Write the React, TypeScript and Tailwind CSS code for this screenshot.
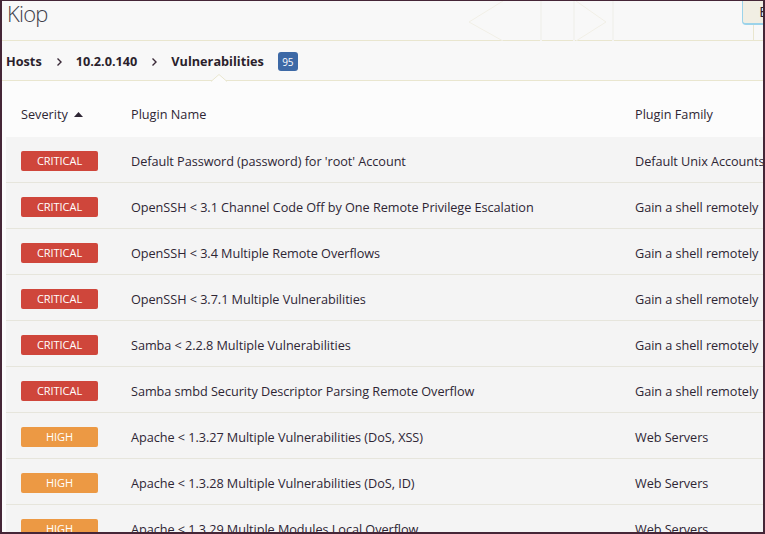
import React from "react";

type Vuln = {
  severity: "CRITICAL" | "HIGH";
  name: string;
  family: string;
};

const vulns: Vuln[] = [
  { severity: "CRITICAL", name: "Default Password (password) for 'root' Account", family: "Default Unix Accounts" },
  { severity: "CRITICAL", name: "OpenSSH < 3.1 Channel Code Off by One Remote Privilege Escalation", family: "Gain a shell remotely" },
  { severity: "CRITICAL", name: "OpenSSH < 3.4 Multiple Remote Overflows", family: "Gain a shell remotely" },
  { severity: "CRITICAL", name: "OpenSSH < 3.7.1 Multiple Vulnerabilities", family: "Gain a shell remotely" },
  { severity: "CRITICAL", name: "Samba < 2.2.8 Multiple Vulnerabilities", family: "Gain a shell remotely" },
  { severity: "CRITICAL", name: "Samba smbd Security Descriptor Parsing Remote Overflow", family: "Gain a shell remotely" },
  { severity: "HIGH", name: "Apache < 1.3.27 Multiple Vulnerabilities (DoS, XSS)", family: "Web Servers" },
  { severity: "HIGH", name: "Apache < 1.3.28 Multiple Vulnerabilities (DoS, ID)", family: "Web Servers" },
  { severity: "HIGH", name: "Apache < 1.3.29 Multiple Modules Local Overflow", family: "Web Servers" },
];

function SeverityBadge({ level }: { level: Vuln["severity"] }) {
  return (
    <span
      className={
        "flex h-[20px] w-[77px] items-center justify-center rounded-[2px] text-[11px] leading-none text-white " +
        (level === "CRITICAL" ? "bg-[#cf463b]" : "bg-[#ec9944]")
      }
    >
      {level}
    </span>
  );
}

function Chevron() {
  return (
    <svg width="7" height="10" viewBox="0 0 7 10" className="text-[#3a2a38]">
      <path d="M1.5 1.5 L5 5 L1.5 8.5" fill="none" stroke="currentColor" strokeWidth="1.4" />
    </svg>
  );
}

export default function App() {
  return (
    <div
      className="h-[534px] w-[765px] overflow-hidden border-x-2 border-t border-b-2 border-[#452637] bg-[#fcfcfc] text-[12.7px] text-[#2e2634]"
      style={{ fontFamily: "'Open Sans', 'Noto Sans', sans-serif" }}
    >
      {/* title bar */}
      <div className="relative flex h-[40px] items-start border-b border-[#e9e6cf] bg-[#f8f8f8] pl-[5px]">
        <span className="text-[22px] font-light leading-[24px] tracking-[-0.8px] text-[#40404a]">Kiop</span>
        <svg className="absolute left-[466px] top-0" width="150" height="40" viewBox="0 0 150 40">
          <path d="M35 0 L1 21 L35 40" fill="none" stroke="#f1efe6" strokeWidth="1" />
          <path d="M108 0 L138 21 L108 40" fill="none" stroke="#f1efe6" strokeWidth="1" />
          <line x1="73" y1="0" x2="73" y2="40" stroke="#f3f3f0" strokeWidth="2" />
          <line x1="106" y1="0" x2="106" y2="40" stroke="#f3f3f0" strokeWidth="2" />
          <line x1="145" y1="0" x2="145" y2="40" stroke="#f3f3f0" strokeWidth="2" />
        </svg>
        <div className="absolute right-0 top-0 flex h-[24px] w-[21px] items-center justify-end overflow-hidden rounded-bl-[4px] border-b-2 border-l border-[#9bd3ea] bg-[#f1eee3] text-[14px] leading-none text-[#2a2030]">
          <span className="mr-[-4px]">E</span>
        </div>
        <div className="absolute right-[9px] top-[24px] h-[16px] w-px bg-[#e9e6cf]" />
      </div>

      {/* breadcrumb */}
      <div className="relative flex h-[40px] items-center border-b border-[#e9e6cf] bg-[#f8f8f8] pl-[4px] pt-[2px] font-bold text-[#2b1f2c]">
        <span>Hosts</span>
        <span className="ml-[14px] mr-[13px] flex"><Chevron /></span>
        <span>10.2.0.140</span>
        <span className="ml-[14px] mr-[13px] flex"><Chevron /></span>
        <span>Vulnerabilities</span>
        <span className="ml-[14px] flex h-[19px] w-[20px] items-center justify-center rounded-[3px] bg-[#3d69a6] text-[10px] font-normal leading-none text-white">
          95
        </span>
        <svg className="absolute left-[209px] top-[33px]" width="16" height="8" viewBox="0 0 16 8">
          <path d="M0 7.5 L8 0.5 L16 7.5" fill="#fcfcfc" stroke="#e9e6cf" strokeWidth="1" />
        </svg>
      </div>

      {/* table */}
      <div className="pl-[4px]">
        <div className="grid h-[56px] grid-cols-[125px_504px_1fr] items-center pt-[11px]">
          <div className="flex items-center gap-[6px] pl-[15px]">
            Severity
            <svg width="9" height="5" viewBox="0 0 9 5">
              <path d="M0 5 L4.5 0 L9 5 Z" fill="#2e2634" />
            </svg>
          </div>
          <div>Plugin Name</div>
          <div>Plugin Family</div>
        </div>
        {vulns.map((v, i) => (
          <div
            key={i}
            className="grid h-[46px] grid-cols-[125px_504px_1fr] items-center whitespace-nowrap border-b border-[#e6e5dc] bg-[#f4f4f4] pt-[2px] tracking-[-0.05px]"
          >
            <div className="pl-[15px]">
              <SeverityBadge level={v.severity} />
            </div>
            <div className="pt-[2px]">{v.name}</div>
            <div className="pt-[2px]">{v.family}</div>
          </div>
        ))}
      </div>
    </div>
  );
}
